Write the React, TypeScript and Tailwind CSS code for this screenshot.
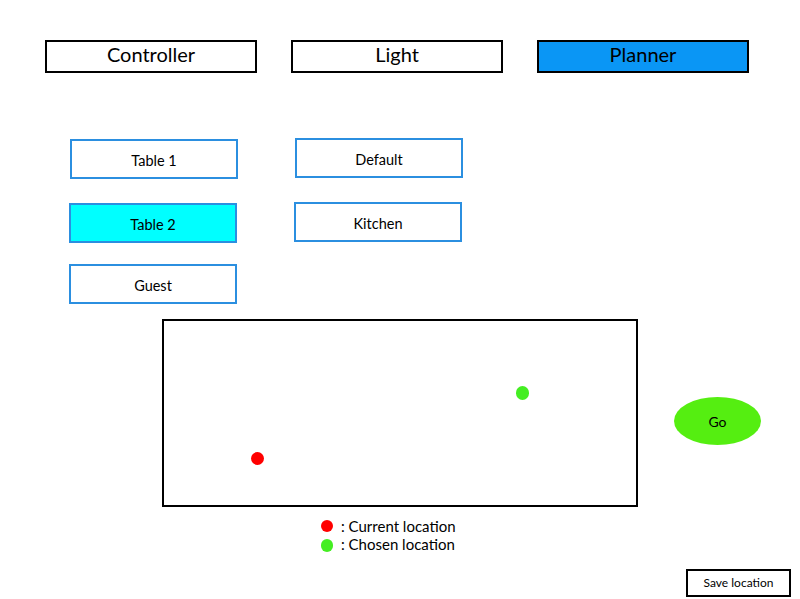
import React from "react";

const font = { fontFamily: "Lato, 'Open Sans', sans-serif" };

const TabButton = ({ label, active }: { label: string; active?: boolean }) => (
  <button
    type="button"
    className={`w-[212px] h-[33px] border-2 border-black text-[20px] text-black leading-none pb-[5px] ${
      active ? "bg-[#0a96f5]" : "bg-white"
    }`}
  >
    {label}
  </button>
);

const PlaceButton = ({ label, active }: { label: string; active?: boolean }) => (
  <button
    type="button"
    className={`w-[168px] h-[40px] border-2 border-[#2b8fe0] text-[14.5px] text-black pt-[3px] ${
      active ? "bg-[#00ffff]" : "bg-white"
    }`}
  >
    {label}
  </button>
);

const App = () => {
  return (
    <div className="w-[800px] h-[599px] bg-white relative overflow-hidden" style={font}>
      {/* tabs */}
      <div className="flex pt-[40px] pl-[45px] gap-[34px]">
        <TabButton label="Controller" />
        <TabButton label="Light" />
        <TabButton label="Planner" active />
      </div>

      {/* places */}
      <div className="flex gap-[56px] pl-[69px] mt-[66px]">
        <div className="flex flex-col">
          <div className="pl-px"><PlaceButton label="Table 1" /></div>
          <div className="mt-[24px]"><PlaceButton label="Table 2" active /></div>
          <div className="mt-[21px]"><PlaceButton label="Guest" /></div>
        </div>
        <div className="flex flex-col -mt-px">
          <div className="pl-px"><PlaceButton label="Default" /></div>
          <div className="mt-[24px]"><PlaceButton label="Kitchen" /></div>
        </div>
      </div>

      {/* map + go */}
      <div className="flex items-start pl-[162px] mt-[15px]">
        <div className="relative w-[476px] h-[188px] border-2 border-black">
          <span className="absolute left-[87px] top-[131px] w-[13px] h-[13px] rounded-full bg-[#ff0000]" />
          <span className="absolute left-[352px] top-[65px] w-[13px] h-[14px] rounded-full bg-[#44ee22]" />
        </div>
        <button
          type="button"
          className="ml-[36px] mt-[78px] w-[87px] h-[48px] rounded-[50%] bg-[#55ee11] text-[14px] text-black"
        >
          Go
        </button>
      </div>

      {/* legend */}
      <div className="pl-[321px] mt-[10px] text-[15px] text-black leading-[18px]">
        <div className="flex items-center gap-[8px]">
          <span className="w-[12px] h-[12px] rounded-full bg-[#ff0000]" />
          <span>: Current location</span>
        </div>
        <div className="flex items-center gap-[8px]">
          <span className="w-[12px] h-[13px] rounded-full bg-[#44ee22] mt-[2px]" />
          <span>: Chosen location</span>
        </div>
      </div>

      <div className="flex justify-end pr-[9px] mt-[16px]">
        <button
          type="button"
          className="w-[105px] h-[28px] border-2 border-black bg-white text-[12px] text-black"
        >
          Save location
        </button>
      </div>
    </div>
  );
};

export default App;
